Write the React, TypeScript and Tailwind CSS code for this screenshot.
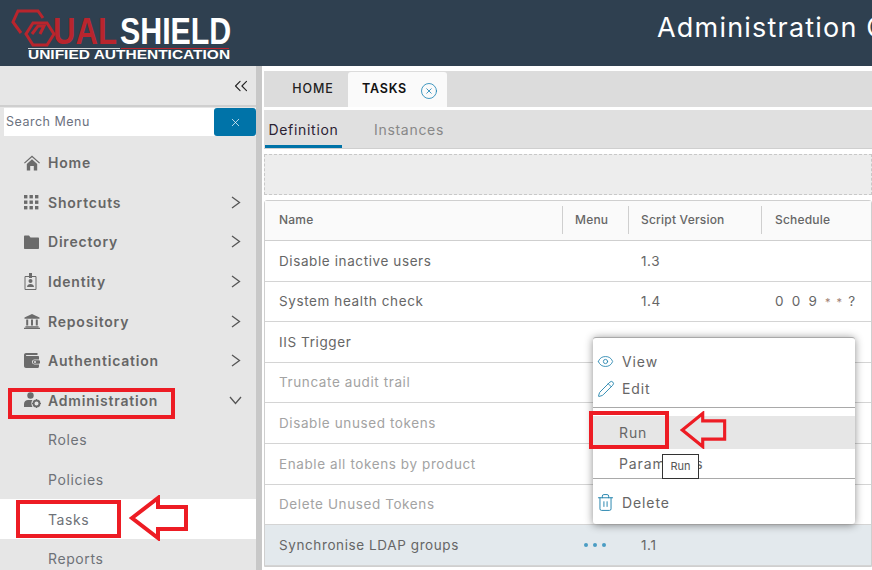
import { ChevronsLeft, X, Eye, Pencil, Trash2, CircleX } from 'lucide-react';

const font = 'font-["Inter","Open_Sans",sans-serif]';

// icons of the side menu
function HomeIcon() {
	return (
		<svg width="16" height="16" viewBox="0 0 16 16" fill="#6b6b6b">
			<path d="M8 0.500 0 7.800l.8.8L8 2.200l7.200 6.400.8-.8z" />
			<path d="M2.800 9 8 4.300 13.200 9v6.500H9.800v-4.500H6.200v4.500H2.800z" />
		</svg>
	);
}

function GridIcon() {
	return (
		<svg width="15" height="15" viewBox="0 0 15 15" fill="#6b6b6b">
			{[0, 5.5, 11].map((y) => [0, 5.5, 11].map((x) => <rect key={`${x}-${y}`} x={x} y={y} width="3.4" height="3.4" />))}
		</svg>
	);
}

function FolderIcon() {
	return (
		<svg width="15" height="14" viewBox="0 0 15 14" fill="#6b6b6b">
			<path d="M0 1.500C0 1 .4.500 1 .5h4l1.500 2H14c.6 0 1 .4 1 1V13c0 .6-.4 1-1 1H1c-.6 0-1-.4-1-1z" />
		</svg>
	);
}

function BadgeIcon() {
	return (
		<svg width="13" height="17" viewBox="0 0 13 17" fill="#6b6b6b">
			<path d="M1 3.500h11v13H1z" fill="none" stroke="#6b6b6b" />
			<rect x="5" y="0" width="3" height="5" />
			<circle cx="6.500" cy="8" r="2" />
			<path d="M3 14c0-4 7-4 7 0z" />
		</svg>
	);
}

function BankIcon() {
	return (
		<svg width="16" height="15" viewBox="0 0 16 15" fill="#6b6b6b">
			<path d="M8 0 0.500 3.600v1.200h15V3.600z" />
			<path d="M2.200 5.600h2v6h-2zM7 5.600h2v6H7zM11.800 5.600h2v6h-2zM1.400 12.200h13.200v1.200H1.400zM0 13.800h16V15H0z" />
		</svg>
	);
}

function WalletIcon() {
	return (
		<svg width="16" height="15" viewBox="0 0 16 15">
			<path d="M2 0h11.500v2H2.400C1.800 2 1.800 3 2.400 3H14c.6 0 1 .4 1 1v2.500H10.500a2.500 2.500 0 0 0 0 5H15V13.500c0 .8-.6 1.500-1.400 1.500H2c-1.100 0-2-.9-2-2V2C0 .9.900 0 2 0z" fill="#6b6b6b" />
			<rect x="9" y="7.300" width="7" height="3.500" rx="1.200" fill="#6b6b6b" />
			<circle cx="11" cy="9" r="1" fill="#e6e6e6" />
		</svg>
	);
}

function AdminIcon() {
	return (
		<svg width="17" height="16" viewBox="0 0 17 16" fill="#6b6b6b">
			<circle cx="6.500" cy="3.500" r="3.200" />
			<path d="M0 15v-3c0-2.500 2-4 4-4h4.500c-1.500 1.500-1.500 5 0 7z" />
			<circle cx="12.500" cy="11.500" r="3" fill="none" stroke="#6b6b6b" strokeWidth="2" />
			<path d="M12 7h1v1.500h-1zM12 14.500h1V16h-1zM8 11h1.500v1H8zM15.500 11H17v1h-1.500z" />
		</svg>
	);
}

function ArrowRight() {
	return (
		<svg width="10" height="13" viewBox="0 0 10 13" fill="none" stroke="#555" strokeWidth="1.300">
			<path d="M1 1l7.500 5.500L1 12" />
		</svg>
	);
}

function ArrowDown() {
	return (
		<svg width="13" height="9" viewBox="0 0 13 9" fill="none" stroke="#555" strokeWidth="1.300">
			<path d="M1 1l5.500 6.500L12 1" />
		</svg>
	);
}

function Logo() {
	return (
		<div className="relative w-[240px] h-[66px] shrink-0 overflow-hidden">
			<svg className="absolute left-0 top-0" width="60" height="50" viewBox="0 0 60 50" fill="none" stroke="#b9252d" strokeWidth="3">
				<path d="M21 33 13 22 18 11h20l5 7" />
				<path d="M33 23h14l7 11-7 11H33l-7-11z" />
				<path d="M32 34l6-8h6l-4 8" />
			</svg>
			<span className='absolute left-[53px] top-[17px] text-[37px] leading-[30px] font-["Liberation_Sans"] font-bold text-[#b9252d] scale-x-[.84] origin-left'>UAL</span>
			<span className='absolute left-[120px] top-[17px] text-[37px] leading-[30px] font-["Liberation_Sans"] font-bold text-white scale-x-[.82] origin-left'>SHIELD</span>
			<div className="absolute left-[28px] top-[48px] w-[92px] h-[1px] bg-[#cfd3d6]" />
			<div className="absolute left-[121px] top-[48px] w-[108px] h-[1px] bg-[#b9252d]" />
			<span className='absolute left-[28px] top-[50px] text-[12px] leading-[10px] font-["Liberation_Sans"] font-bold text-white whitespace-nowrap scale-x-[1.290] origin-left'>UNIFIED AUTHENTICATION</span>
		</div>
	);
}

const menu = [
	{ label: 'Home', icon: <HomeIcon />, chevron: null },
	{ label: 'Shortcuts', icon: <GridIcon />, chevron: 'right' },
	{ label: 'Directory', icon: <FolderIcon />, chevron: 'right' },
	{ label: 'Identity', icon: <BadgeIcon />, chevron: 'right' },
	{ label: 'Repository', icon: <BankIcon />, chevron: 'right' },
	{ label: 'Authentication', icon: <WalletIcon />, chevron: 'right' },
	{ label: 'Administration', icon: <AdminIcon />, chevron: 'down' },
];

const subMenu = ['Roles', 'Policies', 'Tasks', 'Reports'];

const rows = [
	{ name: 'Disable inactive users', version: '1.3', muted: false },
	{ name: 'System health check', version: '1.4', schedule: true, muted: false },
	{ name: 'IIS Trigger', version: '', muted: false },
	{ name: 'Truncate audit trail', version: '', muted: true },
	{ name: 'Disable unused tokens', version: '', muted: true },
	{ name: 'Enable all tokens by product', version: '', muted: true },
	{ name: 'Delete Unused Tokens', version: '', muted: true },
	{ name: 'Synchronise LDAP groups', version: '1.1', muted: false, selected: true },
];

function Sidebar() {
	return (
		<aside className="w-[256px] shrink-0 bg-[#e6e6e6] flex flex-col overflow-hidden">
			<div className="h-[41px] shrink-0 flex items-center justify-end pr-[4px] border-b-2 border-[#cfcfcf]">
				<ChevronsLeft size={22} strokeWidth={1.2} className="text-[#222]" />
			</div>
			<div className="h-[28px] shrink-0 mt-[1px] ml-[4px] flex bg-white">
				<div className="flex-1 pl-[2px] text-[12.500px] leading-[28px] text-[#6c7280] tracking-[.5px]">Search Menu</div>
				<div className="w-[42px] bg-[#0073a8] rounded-[3px] flex items-center justify-center">
					<X size={13} strokeWidth={1.3} className="text-white" />
				</div>
			</div>
			<nav className="mt-[7px] shrink-0">
				{menu.map((m) => (
					<div key={m.label} className="h-[39.600px] flex items-center pl-[24px] pr-[15px]">
						<span className="w-[24px] flex items-center">{m.icon}</span>
						<span className="flex-1 text-[14px] font-semibold text-[#666] tracking-[.8px]">{m.label}</span>
						{m.chevron === 'right' && <ArrowRight />}
						{m.chevron === 'down' && <span className="-mr-[1px]"><ArrowDown /></span>}
					</div>
				))}
				{subMenu.map((s) => (
					<div key={s} className={`h-[39.600px] flex items-center pl-[48px] text-[14px] text-[#6e7278] tracking-[.6px] ${s === 'Tasks' ? 'bg-white' : ''}`}>
						{s}
					</div>
				))}
			</nav>
		</aside>
	);
}

function Table() {
	const cols = 'grid grid-cols-[297px_66px_133px_110px_1fr]';
	return (
		<div className="mt-[5px] border border-[#cfcfcf] rounded-t-[3px] bg-white">
			<div className={`${cols} h-[40px] pb-[1px] bg-[#fafafa] border-b border-[#cfcfcf] items-center text-[12px] font-medium text-[#666] tracking-[.2px]`}>
				<div className="pl-[14px]">Name</div>
				<div className="pl-[12px] h-[28px] leading-[28px] border-l border-[#cfcfcf]">Menu</div>
				<div className="pl-[12px] h-[28px] leading-[28px] border-l border-[#cfcfcf]">Script Version</div>
				<div className="pl-[13px] h-[28px] leading-[28px] border-l border-[#cfcfcf]">Schedule</div>
				<div className="h-[28px] border-l border-[#cfcfcf]" />
			</div>
			{rows.map((r) => (
				<div key={r.name} className={`${cols} h-[40.600px] border-b border-[#d4d4d4] items-center text-[13.500px] tracking-[.6px] ${r.selected ? 'bg-[#e3e9ed]' : ''} ${r.muted ? 'text-[#a3a3a3]' : 'text-[#666]'}`}>
					<div className="pl-[14px] whitespace-nowrap">{r.name}</div>
					<div className="pl-[22px] flex gap-[5px]">
						{r.selected && [0, 1, 2].map((d) => <span key={d} className="w-[4px] h-[4px] rounded-full bg-[#4a9cc3]" />)}
					</div>
					<div className="pl-[13px]">{r.version}</div>
					<div className="pl-[14px] tracking-[2.200px] whitespace-nowrap">
						{r.schedule && (
							<>
								0 0 9 <span className="text-[#a08070] text-[11px] tracking-[1.500px]">* * </span>?
							</>
						)}
					</div>
					<div />
				</div>
			))}
		</div>
	);
}

function ContextMenu() {
	return (
		<div className="absolute left-[593px] top-[337px] w-[262px] h-[187px] bg-white rounded-[3px] border-t border-[#a9a9a9] shadow-[0_1px_8px_rgba(0,0,0,.45)] text-[14px] text-[#666] tracking-[.9px]">
			<div className="h-[10px]" />
			<div className="h-[27px] flex items-center pl-[4px]">
				<Eye size={17} strokeWidth={1.2} className="text-[#2283ad]" />
				<span className="ml-[8px]">View</span>
			</div>
			<div className="h-[27px] flex items-center pl-[4px]">
				<Pencil size={18} strokeWidth={1.2} className="text-[#2283ad]" />
				<span className="ml-[7px]">Edit</span>
			</div>
			<div className="mt-[5px] border-t border-[#a9a9a9]" />
			<div className="mt-[8px] h-[33px] bg-[#e6e6e6] flex items-center pl-[26px]">Run</div>
			<div className="h-[28px] flex items-center pl-[26px]">Parameters</div>
			<div className="mt-[1px] border-t border-[#a9a9a9]" />
			<div className="mt-[10px] h-[26px] flex items-center pl-[3px]">
				<Trash2 size={19} strokeWidth={1.2} className="text-[#2283ad]" />
				<span className="ml-[7px]">Delete</span>
			</div>
		</div>
	);
}

// red call-out arrow, pointing left
function RedArrow({ className, width, height }: any) {
	return (
		<svg className={`absolute ${className}`} width={width} height={height} viewBox="0 0 60 46" preserveAspectRatio="none">
			<path d="M3 23 29 3v9h28v22H29v9z" fill="none" stroke="#ed1c24" strokeWidth="4" />
		</svg>
	);
}

function RedBox({ className }: any) {
	return <div className={`absolute border-[4px] border-[#ed1c24] ${className}`} />;
}

export default function App() {
	return (
		<div className={`relative w-[872px] h-[570px] overflow-hidden bg-white ${font}`}>
			<header className="h-[66px] bg-[#2f4050] flex">
				<Logo />
				<div className="ml-[417px] mt-[10px] text-[27px] leading-[36px] text-white whitespace-nowrap tracking-[1.200px]">Administration Console</div>
			</header>

			<div className="flex h-[504px]">
				<Sidebar />
				<div className="w-[6px] bg-[#c8c8c8] shrink-0" />
				<main className="flex-1 pl-[2px] pt-[5px] min-w-0">
					<div className="h-[36px] bg-[#dcdcdc] flex items-end">
						<div className="w-[84px] h-full flex items-center justify-center pl-[14px] text-[12.500px] font-medium tracking-[.9px] text-[#222]">HOME</div>
						<div className="w-[99px] h-[35px] bg-[#fafafa] rounded-t-[3px] flex items-center pl-[14px] text-[12.500px] font-semibold tracking-[.8px] text-[#111]">
							TASKS
							<CircleX size={18} strokeWidth={1.1} className="ml-[13px] mt-[2px] text-[#1d84b5]" />
						</div>
					</div>
					<div className="mt-[3px] h-[39px] bg-[#e0e0e0] border-b border-[#cfcfcf] flex items-stretch text-[14px] tracking-[.7px]">
						<div className="w-[77px] ml-[1px] flex items-center justify-center border-b-[3px] border-[#0073a8] text-[#2b2233] pt-[3px]">Definition</div>
						<div className="ml-[32px] flex items-center text-[#888] pt-[1px]">Instances</div>
					</div>
					<div className="mt-[5px] h-[41px] bg-[#ededed] border border-dashed border-[#c8c8c8]" />
					<Table />
				</main>
			</div>

			<ContextMenu />
			<div className="absolute left-[662px] top-[454px] w-[37px] h-[25px] bg-white border border-[#333] text-[11px] leading-[23px] text-center text-[#555]">Run</div>

			<RedBox className="left-[8px] top-[388px] w-[167px] h-[31px]" />
			<RedBox className="left-[16px] top-[500px] w-[105px] h-[38px]" />
			<RedBox className="left-[589px] top-[411px] w-[80px] h-[38px]" />
			<RedArrow className="left-[129px] top-[495px]" width={60} height={46} />
			<RedArrow className="left-[680px] top-[411px]" width={47} height={38} />
		</div>
	);
}
